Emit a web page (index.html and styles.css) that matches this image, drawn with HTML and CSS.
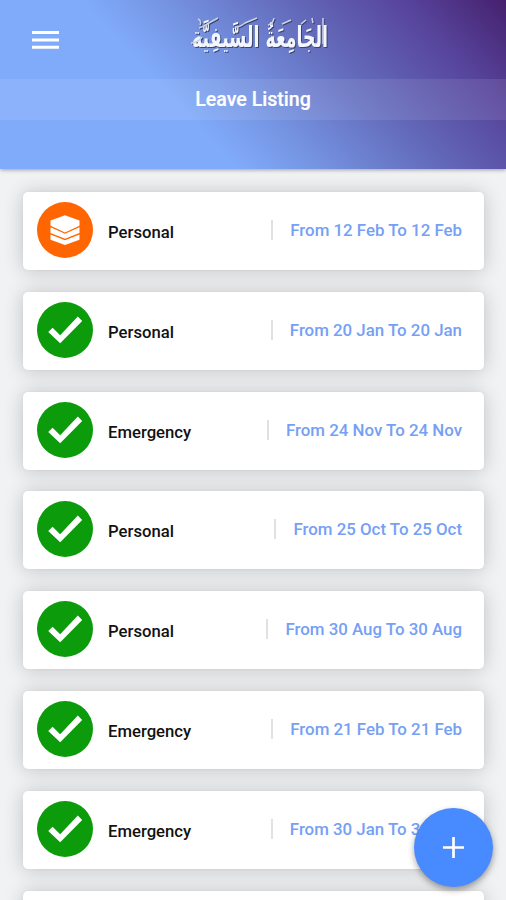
FILE: index.html
```html
<!DOCTYPE html>
<html lang="en">
<head>
<meta charset="utf-8">
<title>Leave Listing</title>
<link rel="stylesheet" href="styles.css">
</head>
<body>
<svg width="0" height="0" class="defs">
  <symbol id="check" viewBox="0 0 56 56"><path d="M11.2 30.1l4.4-4.4 7.6 7.6 17.6-18.7 4.4 4.4L23.2 41.3z" fill="#fff"/></symbol>
  <symbol id="stack" viewBox="0 0 56 56"><path d="M28 13.3l14.5 5.2v5.3L28 30.4l-14.5-6.6v-5.3zM13.5 25.2L28 31.8l14.5-6.6v5.8L28 36.8l-14.5-5.8zM13.5 32.4L28 38.2l14.5-5.8v5.3L28 43l-14.5-5.3z" fill="#fff"/></symbol>
</svg>
<header class="header">
  <div class="topbar">
    <svg class="menu" viewBox="0 0 27 18"><path d="M0 1.6h27M0 8.9h27M0 16.2h27" stroke="#fff" stroke-width="3"/></svg>
    <svg class="logo" viewBox="0 0 142 48">
      <text transform="translate(71 34.5) scale(1 1.2)" text-anchor="middle" textLength="136" lengthAdjust="spacingAndGlyphs" lang="ar">الجَامِعَةُ السَّيفِيَّة</text>
      <path class="flourish" d="M10 16q4-1 8-4l11-6M46 15q5 0 10-4l12-5M9 7q4 2 2 6M2 31q7 0 11-6M79 13q5-1 6-7M93 12l9-4M112 12l5-4M123 6l1 5M134 6v26"/>
    </svg>
  </div>
  <h1 class="title">Leave Listing</h1>
</header>
<main class="list">
  <article class="card"><svg class="status pending"><use href="#stack"/></svg><span class="type">Personal</span><span class="dates">From 12 Feb To 12 Feb</span></article>
  <article class="card"><svg class="status"><use href="#check"/></svg><span class="type">Personal</span><span class="dates">From 20 Jan To 20 Jan</span></article>
  <article class="card"><svg class="status"><use href="#check"/></svg><span class="type">Emergency</span><span class="dates">From 24 Nov To 24 Nov</span></article>
  <article class="card"><svg class="status"><use href="#check"/></svg><span class="type">Personal</span><span class="dates">From 25 Oct To 25 Oct</span></article>
  <article class="card"><svg class="status"><use href="#check"/></svg><span class="type">Personal</span><span class="dates">From 30 Aug To 30 Aug</span></article>
  <article class="card"><svg class="status"><use href="#check"/></svg><span class="type">Emergency</span><span class="dates">From 21 Feb To 21 Feb</span></article>
  <article class="card"><svg class="status"><use href="#check"/></svg><span class="type">Emergency</span><span class="dates">From 30 Jan To 30 Jan</span></article>
  <article class="card"></article>
</main>
<button class="add" aria-label="Add leave"><svg viewBox="0 0 24 24"><path d="M12 1v22M1 12h22" stroke="#fff" stroke-width="2.8"/></svg></button>
</body>
</html>
```

FILE: styles.css
```css
* { box-sizing: border-box; }
body {
  margin: 0;
  height: 900px;
  overflow: hidden;
  position: relative;
  background: #f1f2f4;
  font-family: Roboto, "Liberation Sans", sans-serif;
}
.defs { position: absolute; }
.header {
  position: relative;
  z-index: 1;
  height: 169px;
  background: linear-gradient(47deg, #80abfa 36%, #7594e2 48%, #6369ba 67%, #56439a 85%, #46206d 100%);
  box-shadow: 0 1px 4px rgba(0, 0, 0, .35);
}
.topbar {
  display: grid;
  grid-template-columns: 1fr 142px 1fr;
  align-items: start;
  height: 79px;
  padding: 12px 0 0 32px;
}
.menu { width: 27px; height: 18px; margin-top: 19px; }
.logo { width: 142px; height: 48px; margin-left: -9px; overflow: visible; filter: drop-shadow(1px 1px 0 #3c4468); }
.logo text {
  font-family: "DejaVu Sans", sans-serif;
  font-weight: 700;
  font-size: 24px;
  fill: #f4f6ff;
}
.flourish { fill: none; stroke: #c9d3e8; stroke-width: 1.5; }
.title {
  margin: 0;
  height: 41px;
  line-height: 41px;
  text-align: center;
  color: #fff;
  background: rgba(255, 255, 255, .09);
  font-size: 19.6px;
  font-weight: 500;
  -webkit-text-stroke: .2px #fff;
}
.list {
  display: flex;
  flex-direction: column;
  gap: 21.8px;
  height: 900px;
  overflow: hidden;
  padding: 192px 22px 0 23px;
  margin-top: -169px;
}
.card {
  display: flex;
  align-items: center;
  flex: none;
  height: 78px;
  padding: 0 22px 2px 14px;
  background: #fff;
  border-radius: 5px;
  box-shadow: 0 1px 20px rgba(0, 0, 0, .2), 0 0 3px rgba(0, 0, 0, .05);
}
.status { width: 56px; height: 56px; border-radius: 50%; background: #0b9b0b; }
.pending { background: #ff6500; }
.type {
  margin: 5px auto 0 15px;
  color: #111;
  font-size: 16.7px;
  font-weight: 500;
}
.dates {
  display: flex;
  align-items: center;
  height: 20px;
  padding-left: 17px;
  border-left: 2px solid #e1e1e1;
  color: #75a0f5;
  font-size: 16.85px;
  font-weight: 500;
  white-space: nowrap;
}
.add {
  position: absolute;
  z-index: 2;
  left: 414px;
  top: 808px;
  display: grid;
  place-items: center;
  width: 79px;
  height: 79px;
  padding: 0;
  border: 0;
  border-radius: 50%;
  background: #488aff;
  box-shadow: 0 3px 6px rgba(0, 0, 0, .35);
}
.add svg { width: 23px; height: 23px; }
```
